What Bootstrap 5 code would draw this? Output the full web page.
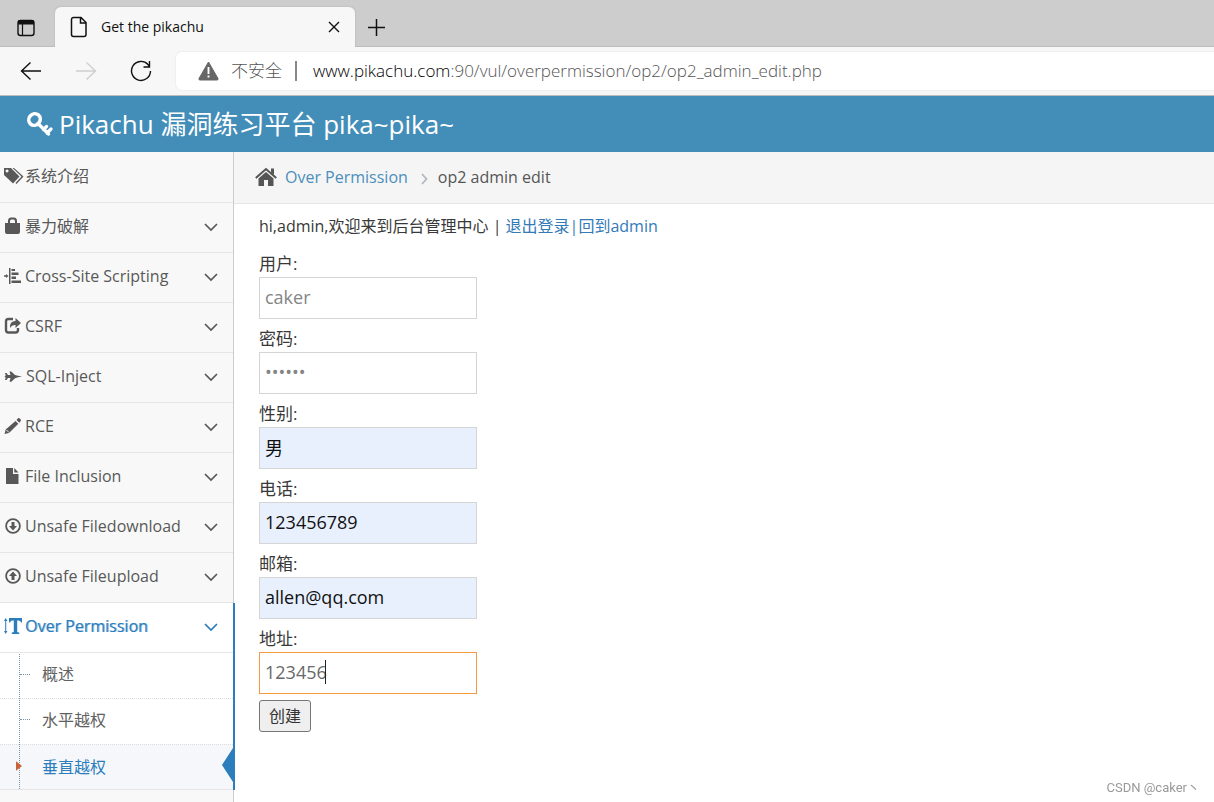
<!DOCTYPE html>
<html lang="zh-CN">
<head>
<meta charset="utf-8">
<meta name="viewport" content="width=device-width, initial-scale=1">
<title>Get the pikachu</title>
<link href="https://cdn.jsdelivr.net/npm/bootstrap@5.3.0/dist/css/bootstrap.min.css" rel="stylesheet">
<style>
body{font-family:"Open Sans","Noto Sans CJK SC",sans-serif;font-size:16px;line-height:24px;color:#393939;background:#fff}
a{text-decoration:none;color:#337ab7}
svg{display:block;flex:none;fill:currentColor}
.line-icon{fill:none;stroke:currentColor}
.bare{border:0;background:none;padding:0;color:#111}
.tabstrip{height:47px;background:#cdcdcd;box-shadow:inset 0 -1px #bdbdbd}
.browser-tab{width:300px;height:40px;margin-left:19px;padding:0 15px 0 14px;background:#f7f7f7;border-radius:6px 6px 0 0;color:#111;font-size:14px;box-shadow:0 0 2px #aaa;clip-path:inset(-3px -3px 0 -3px)}
.toolbar{height:49px;background:#f7f7f7;border-bottom:1px solid #bcbcbc;padding-left:20px}
.nav-btn + .nav-btn{margin-left:33px}
.address{height:38px;margin-left:24px;background:#fff;border-radius:6px 0 0 6px;padding-left:22px;color:#555;font-size:17px;font-weight:300;box-shadow:0 0 2px #ddd}
.address .sep{width:2px;height:20px;background:#888;margin:0 16px 0 13px}
.address b{font-weight:300;color:#000}
.site-head{height:56px;background:#438eb9;color:#fff;padding-left:26px;font-size:26px}
.site-head a{color:#fff;gap:6px}
.page-body{min-height:calc(100vh - 152px)}
.side{width:234px;background:#f8f8f8;border-right:1px solid #ccc}
.side .entry{height:50px;border-bottom:1px solid #e5e5e5;padding:0 15px 4px 4px;color:#585858}
.side .first-entry{height:51px;padding-bottom:2px}
.side .entry svg:first-child{margin-right:3px}
.side .entry .chevron{margin-top:3px}
.side .opened{background:#fff;position:relative}
.side .opened::after{content:"";position:absolute;top:0;bottom:0;right:-2px;width:2px;background:#2b7dbc}
.side .opened > .entry{color:#2b7dbc;text-shadow:1px 0 rgba(43,125,188,.5)}
.tree{position:relative;border-bottom:1px solid #e5e5e5}
.tree::before{content:"";position:absolute;z-index:1;left:19px;top:1px;bottom:0;border-left:1px dotted #7794af}
.tree li{position:relative}
.tree a{display:flex;align-items:center;height:46px;padding:0 0 3px 42px;color:#616161;border-top:1px dotted #ddd}
.tree li:first-child a{height:45px;border-top:0}
.tree li:last-child a{height:45px;padding-bottom:1px}
.tree li::before{content:"";position:absolute;left:20px;top:21px;width:10px;border-top:1px dotted #7794af}
.tree li.current a{color:#2b7dbc;background:#f5f7fa}
.tree li.current::before{z-index:2;left:16px;top:14px;width:6px;height:16px;border:0;background:#c86139;clip-path:polygon(0 20%,100% 50%,0 80%)}
.tree li.current::after{content:"";position:absolute;right:0;top:4px;width:11px;height:34px;background:#2b7dbc;clip-path:polygon(100% 0,0 50%,100% 100%)}
.crumbs{height:52px;background:#f5f5f5;border-bottom:1px solid #e5e5e5;padding:0 0 2px 21px;color:#555}
.crumbs a{color:#4c8fbd}
.content-area{padding:10px 25px}
.field{margin-bottom:6px;font-size:17px}
.field label{display:block;height:27px;line-height:28px}
.field .form-control{width:218px;height:42px;padding:3px 5px 5px;border:1px solid #d5d5d5;border-radius:0;color:#858585;font-size:18px;box-shadow:none}
.field .filled{background:#e8f0fe;color:#111}
.field .active-box{border-color:#f59942;color:#696969}
.caret{position:absolute;left:66px;bottom:10px;width:1px;height:24px;background:#222}
.submit{height:32px;width:52px;border:1px solid #767676;border-radius:3px;background:#efefef;color:#333;padding:0}
.watermark{position:fixed;right:14px;bottom:4px;font:13px/20px Roboto,"Noto Sans CJK SC",sans-serif;color:#999}
</style>
</head>
<body>
<svg class="d-none">
<symbol id="chev" viewBox="0 0 14 14"><path d="M1 4l6 6 6-6" fill="none" stroke="currentColor" stroke-width="1.7"/></symbol>
</svg>

<div class="tabstrip d-flex align-items-end">
  <button class="bare align-self-center ms-3 mt-2" aria-label="Tabs"><svg class="line-icon" width="20" height="20" viewBox="0 0 20 20"><rect x="2" y="2.500" width="16" height="15" rx="2.500" stroke-width="1.400"/><path d="M2 4.500h16" stroke-width="4"/><path d="M6.500 6v11" stroke-width="1.200"/></svg></button>
  <div class="browser-tab d-flex align-items-center">
    <svg class="line-icon me-2" width="20" height="22" viewBox="0 0 20 22"><path d="M4.500 1.500h7.500l5 5v12a2 2 0 0 1-2 2H4.500a2 2 0 0 1-2-2v-15a2 2 0 0 1 2-2zM11.500 1.500v5.500h5.500" stroke-width="1.500"/></svg>
    <span class="flex-grow-1 ps-1">Get the pikachu</span>
    <button class="bare" aria-label="Close"><svg class="line-icon" width="12" height="12" viewBox="0 0 12 12"><path d="M1 1l10 10M11 1L1 11" stroke-width="1.400"/></svg></button>
  </div>
  <button class="bare ms-2 align-self-center mt-2 ps-1" aria-label="New tab"><svg class="line-icon" width="19" height="19" viewBox="0 0 19 19"><path d="M9.500 1v17M1 9.500h17" stroke-width="1.500"/></svg></button>
</div>

<div class="toolbar d-flex align-items-center">
  <button class="bare nav-btn" aria-label="Back"><svg class="line-icon" width="22" height="22" viewBox="0 0 22 22"><path d="M21 11H1.500M10.500 2.500L1.500 11l9 8.500" stroke-width="1.400"/></svg></button>
  <button class="bare nav-btn" aria-label="Forward" disabled><svg class="line-icon" width="22" height="22" viewBox="0 0 22 22" color="#cfcfcf"><path d="M1 11h19.500M11.500 2.500l9 8.500-9 8.500" stroke-width="1.400"/></svg></button>
  <button class="bare nav-btn" aria-label="Reload"><svg class="line-icon" width="22" height="22" viewBox="0 0 22 22"><path d="M20.500 11a9.500 9.500 0 1 1-2.500-6.500l1.500 2M19.500 1v6h-6" stroke-width="1.400"/></svg></button>
  <div class="address d-flex align-items-center flex-grow-1">
    <svg width="21" height="20" viewBox="0 0 21 20" color="#666"><path d="M10.500 1L20 17.500q.5 1.500-1 1.500H2q-1.500 0-1-1.500z" stroke="#666"/><path d="M10.500 6v7M10.500 14.500v2" stroke="#fff" stroke-width="1.900"/></svg>
    <span class="ms-2 ps-1">不安全</span><span class="sep"></span>
    <span><b>www.pikachu.com</b>:90/vul/overpermission/op2/op2_admin_edit.php</span>
  </div>
</div>

<header class="site-head d-flex align-items-center">
  <a href="#" class="d-flex align-items-center">
    <svg width="27" height="27" viewBox="0 0 27 27"><ellipse cx="8.500" cy="8.500" rx="5.500" ry="6" fill="none" stroke="#fff" stroke-width="3.600" transform="rotate(40 8.500 8.500)"/><path d="M12 12.500L22.500 23M17.500 18.500l3-3M21 22l4-4" fill="none" stroke="#fff" stroke-width="3.200" stroke-linecap="round"/></svg>
    <span>Pikachu 漏洞练习平台 pika~pika~</span>
  </a>
</header>

<div class="page-body d-flex">
<nav class="side flex-shrink-0">
  <ul class="list-unstyled mb-0">
    <li><a href="#" class="entry first-entry d-flex align-items-center"><svg width="18" height="18" viewBox="0 0 18 18" overflow="visible"><path fill-rule="evenodd" d="M0 1h7l8.500 8.500L9 16.500 0 8zM3 2.500a1.500 1.500 0 1 0 .1 0z"/><path d="M8.500 1h1.500l9.500 8.500-7 7.500-1-1 6-6.500z"/></svg>系统介绍</a></li>
    <li><a href="#" class="entry d-flex align-items-center"><svg width="18" height="18" viewBox="0 0 18 18"><path fill-rule="evenodd" d="M1 6h3V4q0-3.500 3-3.500h3q3 0 3 3.500v2h3v9q0 2-2 2H3q-2 0-2-2zM6 6h5V4.500q0-2-1.500-2h-2Q6 2.500 6 4.500z"/></svg><span class="flex-grow-1">暴力破解</span><svg class="chevron" width="14" height="14"><use href="#chev"/></svg></a></li>
    <li><a href="#" class="entry d-flex align-items-center"><svg width="18" height="18" viewBox="0 0 18 18"><path d="M5 1h1.500v16H5zM7.500 2H11v2H7.500zM7.500 5.500h7v2.500h-7zM7.500 9.500H12V12H7.500zM7.500 13.500H17V16H7.500zM0 8.300h2V7l2.500 2L2 11V9.700H0z"/></svg><span class="flex-grow-1">Cross-Site Scripting</span><svg class="chevron" width="14" height="14"><use href="#chev"/></svg></a></li>
    <li><a href="#" class="entry d-flex align-items-center"><svg width="18" height="18" viewBox="0 0 18 18"><path d="M9 2H4.500Q2 2 2 4.500v8.500q0 2.500 2.500 2.500h7Q14 15.500 14 13v-2" fill="none" stroke="currentColor" stroke-width="2.400"/><path d="M11.500 1L17 6l-5.500 5V8Q8 7.500 6 11 5.500 4 11.500 4z"/></svg><span class="flex-grow-1">CSRF</span><svg class="chevron" width="14" height="14"><use href="#chev"/></svg></a></li>
    <li><a href="#" class="entry d-flex align-items-center"><svg width="19" height="18" viewBox="0 0 19 18"><path d="M1 6h1.500L4 8h2.500L5.500 4.500h1.800L11 8l3 .7 4 .8-4 .8-3 .9-3.700 3.500H5.500l1-3.700H4L2.500 13H1l.7-2.500L.5 9.500l1.200-1z"/></svg><span class="flex-grow-1">SQL-Inject</span><svg class="chevron" width="14" height="14"><use href="#chev"/></svg></a></li>
    <li><a href="#" class="entry d-flex align-items-center"><svg width="18" height="18" viewBox="0 0 18 18"><path d="M.5 17l1.200-4.500L11.500 4l2.800 2.800L5 16zM12.500 3l1.500-1.700q.8-.7 1.500 0l1.200 1.200q.7.800 0 1.500L15.300 5.800z"/><path d="M2.500 13l2.500 2.500" stroke="#f8f8f8"/></svg><span class="flex-grow-1">RCE</span><svg class="chevron" width="14" height="14"><use href="#chev"/></svg></a></li>
    <li><a href="#" class="entry d-flex align-items-center"><svg width="18" height="18" viewBox="0 0 18 18"><path d="M2 1h7v6h5.500v10H2zM10.300 1l4.200 4.500h-4.200z"/></svg><span class="flex-grow-1">File Inclusion</span><svg class="chevron" width="14" height="14"><use href="#chev"/></svg></a></li>
    <li><a href="#" class="entry d-flex align-items-center"><svg width="18" height="18" viewBox="0 0 18 18"><circle cx="9" cy="9" r="6.900" fill="none" stroke="currentColor" stroke-width="1.800"/><path d="M7.500 5h3v4H13l-4 4.500L5 9h2.500z"/></svg><span class="flex-grow-1">Unsafe Filedownload</span><svg class="chevron" width="14" height="14"><use href="#chev"/></svg></a></li>
    <li><a href="#" class="entry d-flex align-items-center"><svg width="18" height="18" viewBox="0 0 18 18"><circle cx="9" cy="9" r="6.900" fill="none" stroke="currentColor" stroke-width="1.800"/><path d="M7.500 13h3V9H13L9 4.500 5 9h2.500z"/></svg><span class="flex-grow-1">Unsafe Fileupload</span><svg class="chevron" width="14" height="14"><use href="#chev"/></svg></a></li>
    <li class="opened"><a href="#" class="entry d-flex align-items-center"><svg width="18" height="18" viewBox="0 0 18 18"><path d="M5 1h13v4.500h-1q-.5-2-2.500-2h-1.300v11q0 1 2 1V17H7.800v-1.500q2 0 2-1v-11H8.500q-2 0-2.500 2H5zM0 4l1.700-3 1.700 3H2.200v10h1.200l-1.700 3L0 14h1.200V4z"/></svg><span class="flex-grow-1">Over Permission</span><svg class="chevron" width="14" height="14"><use href="#chev"/></svg></a>
      <ul class="tree list-unstyled">
        <li><a href="#">概述</a></li>
        <li><a href="#">水平越权</a></li>
        <li class="current"><a href="#">垂直越权</a></li>
      </ul>
    </li>
  </ul>
</nav>

<main class="flex-grow-1">
  <div class="crumbs d-flex align-items-center">
    <svg class="me-2" width="22" height="20" viewBox="0 0 22 20"><path d="M11 5l7.500 6.500V19H13v-6H9v6H3.500v-7.500z"/><path d="M.8 11L11 2l10.200 9" fill="none" stroke="currentColor" stroke-width="2"/><path d="M16 1.500h3V8l-3-2.500z"/></svg>
    <a href="#">Over Permission</a>
    <svg class="line-icon ms-2 me-2 mt-1" width="14" height="12" viewBox="0 0 14 12" color="#b2b6bf"><path d="M6 1l4.500 5L6 11" stroke-width="1.800"/></svg>
    <span>op2 admin edit</span>
  </div>
  <div class="content-area">
    <p class="mb-2">hi,admin,欢迎来到后台管理中心 | <a href="#">退出登录|</a><a href="#">回到admin</a></p>
    <form class="pt-1">
      <div class="field"><label for="user">用户:</label><input id="user" class="form-control" type="text" value="caker"></div>
      <div class="field"><label for="pass">密码:</label><input id="pass" class="form-control" type="password" value="123456"></div>
      <div class="field"><label for="sex">性别:</label><input id="sex" class="form-control filled" type="text" value="男"></div>
      <div class="field"><label for="phone">电话:</label><input id="phone" class="form-control filled" type="text" value="123456789"></div>
      <div class="field"><label for="mail">邮箱:</label><input id="mail" class="form-control filled" type="text" value="allen@qq.com"></div>
      <div class="field position-relative"><label for="addr">地址:</label><input id="addr" class="form-control active-box" type="text" value="123456"><span class="caret"></span></div>
      <button type="button" class="submit">创建</button>
    </form>
  </div>
</main>
</div>
<div class="watermark">CSDN @caker丶</div>
<script src="https://cdn.jsdelivr.net/npm/bootstrap@5.3.0/dist/js/bootstrap.bundle.min.js"></script>
</body>
</html>
